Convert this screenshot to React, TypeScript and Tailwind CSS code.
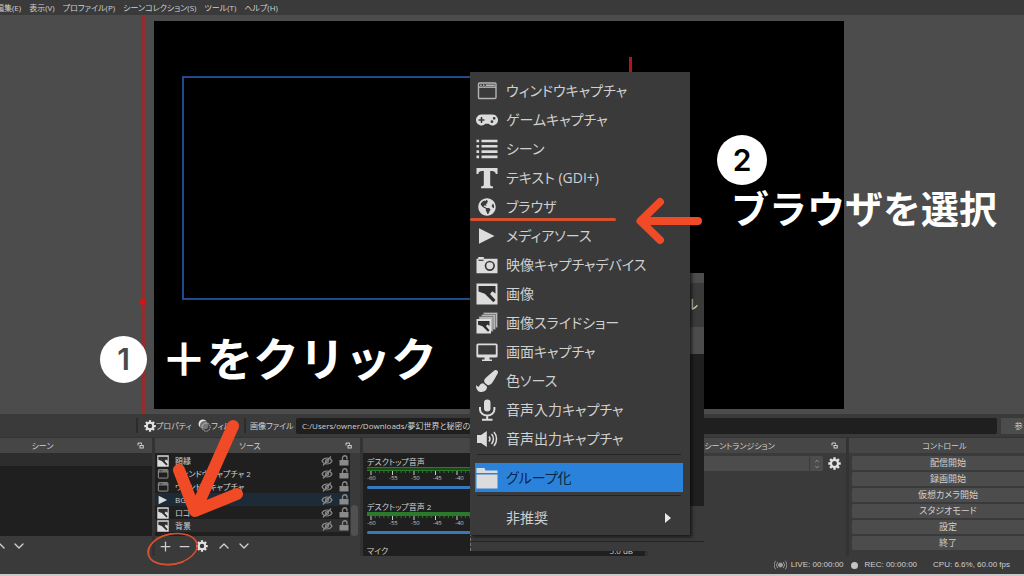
import type { ReactNode } from "react";
import { FaGamepad, FaGlobeAmericas, FaPaintBrush } from "react-icons/fa";
import { ChevronDown, ChevronUp, Minus, Plus } from "lucide-react";

type IconProps = { className?: string };

const WindowIcon = ({ className }: IconProps) => (
  <svg viewBox="0 0 22 22" className={className} fill="none" stroke="#b4b4b4">
    <rect x="2.5" y="3" width="17.5" height="15.5" rx="1" strokeWidth="1.4" />
    <path d="M2.5 7.2h17.5" strokeWidth="1.4" />
    <path d="M4.2 5.2h1.5M7 5.2h1.5M9.8 5.2h9" strokeWidth="1.6" />
  </svg>
);

const ListIcon = ({ className }: IconProps) => (
  <svg viewBox="0 0 22 22" className={className} stroke="currentColor" strokeWidth="2.6">
    <path d="M0.5 3h2.6M5.5 3h16M0.5 8.3h2.6M5.5 8.3h16M0.5 13.6h2.6M5.5 13.6h16M0.5 18.9h2.6M5.5 18.9h16" />
  </svg>
);

const TextIcon = ({ className }: IconProps) => (
  <svg viewBox="0 0 22 22" className={className} fill="currentColor">
    <path d="M0.5 1h21v6h-1.700c-.3-2-1.500-3-4-3h-1.600v13.500c0 1.300.7 1.800 2.800 2v1.700H5v-1.700c2.100-.2 2.800-.7 2.800-2V4H6.200c-2.500 0-3.700 1-4 3H0.500z" />
  </svg>
);

const PlayIcon = ({ className }: IconProps) => (
  <svg viewBox="0 0 22 22" className={className} fill="currentColor">
    <path d="M3 3.300l15.500 7.700L3 18.700z" />
  </svg>
);

const CameraIcon = ({ className }: IconProps) => (
  <svg viewBox="0 0 22 22" className={className}>
    <path fill="currentColor" d="M2.200 3h5.600v1.800h13.700v14.400H0.500V4.800h1.700z" />
    <path d="M2.500 6.300h5" stroke="#3a3a3a" strokeWidth="1.200" />
    <circle cx="13.800" cy="11.800" r="4.300" fill="none" stroke="#3a3a3a" strokeWidth="1.700" />
  </svg>
);

const ImageIcon = ({ className }: IconProps) => (
  <svg viewBox="0 0 22 22" className={className}>
    <rect x="0.5" y="0.5" width="21" height="21" fill="currentColor" />
    <path fill="#2f2f2f" d="M2.500 3h17v7.500l-3.200-2.300-2.300 2.800 5.500 6-2.200 2.300-8.500-8.500-6.300-2.300z" />
  </svg>
);

const SlideshowIcon = ({ className }: IconProps) => (
  <svg viewBox="0 0 22 22" className={className}>
    <g fill="#b8b8b8" stroke="#5a5a5a" strokeWidth="0.600">
      <rect x="7.500" y="0.500" width="14" height="15" />
      <rect x="5.500" y="2.500" width="14" height="15" />
      <rect x="3" y="4.500" width="14" height="15" />
    </g>
    <rect x="0.500" y="7" width="14.500" height="14.500" fill="currentColor" />
    <path fill="#2f2f2f" d="M2 9h11.500v5l-2.200-1.500-1.300 1.800 3.500 4-1.500 1.500-5.500-5.500-4.500-1.500z" />
  </svg>
);

const MonitorIcon = ({ className }: IconProps) => (
  <svg viewBox="0 0 22 22" className={className}>
    <rect x="1.300" y="3.300" width="19.400" height="12.400" rx="0.800" fill="none" stroke="currentColor" strokeWidth="1.800" />
    <path fill="currentColor" d="M1 13.500h20v2.500H1zM8.500 16h5v2.500h2.500V20H6v-1.500h2.500z" />
  </svg>
);

const MicIcon = ({ className }: IconProps) => (
  <svg viewBox="0 0 22 22" className={className}>
    <rect x="8" y="0.500" width="6.500" height="12" rx="3.250" fill="currentColor" />
    <path d="M4 8v2.500a7.200 6 0 0 0 14.400 0V8M11.200 16.500v4M6 20.700h10.500" fill="none" stroke="currentColor" strokeWidth="2" />
  </svg>
);

const SpeakerIcon = ({ className }: IconProps) => (
  <svg viewBox="0 0 22 22" className={className}>
    <path fill="currentColor" d="M1 7h4L10.800 3v16L5 15H1z" />
    <path d="M13 8.500a4 4 0 0 1 0 5M15.500 6a7.500 7.500 0 0 1 0 10M18 4a11 11 0 0 1 0 14" fill="none" stroke="currentColor" strokeWidth="1.500" />
  </svg>
);

const FolderIcon = ({ className }: IconProps) => (
  <svg viewBox="0 0 22 22" className={className} fill="currentColor">
    <path d="M0.500 1h8l1 2.500h12V6H0.500z" />
    <path d="M0.500 7.500h21V21.500H0.500z" />
  </svg>
);

const GearIcon = ({ className }: IconProps) => (
  <svg viewBox="0 0 24 24" className={className} fill="none" stroke="currentColor">
    <circle cx="12" cy="12" r="6.500" strokeWidth="4" />
    <g strokeWidth="4.500">
      <path d="M12 0.500v4M12 19.500v4M0.500 12h4M19.500 12h4M3.900 3.900l2.800 2.800M17.300 17.300l2.800 2.800M3.900 20.100l2.800-2.800M17.300 6.700l2.800-2.800" />
    </g>
  </svg>
);

const FilterIcon = ({ className }: IconProps) => (
  <svg viewBox="0 0 24 24" className={className}>
    <circle cx="9" cy="9" r="8" fill="currentColor" />
    <circle cx="12" cy="12" r="7.500" fill="#777" stroke="#3a3a3a" />
    <circle cx="15" cy="15" r="7.500" fill="none" stroke="currentColor" strokeWidth="1.600" strokeDasharray="2 1.500" />
  </svg>
);

const PopoutIcon = ({ className }: IconProps) => (
  <svg viewBox="0 0 14 14" className={className} fill="none" stroke="currentColor" strokeWidth="2">
    <path d="M2 7V2h7v3" />
    <rect x="6" y="7" width="6.500" height="5" />
  </svg>
);

const HiddenIcon = ({ className }: IconProps) => (
  <svg viewBox="0 0 24 20" className={className} fill="none" stroke="currentColor" strokeWidth="2.400">
    <path d="M2 10c4-8 16-8 20 0-4 8-16 8-20 0z" />
    <circle cx="12" cy="10" r="3" />
    <path d="M4 19L20 1" />
  </svg>
);

const UnlockIcon = ({ className }: IconProps) => (
  <svg viewBox="0 0 20 22" className={className}>
    <path d="M7 10V6a4.500 4.500 0 0 1 9 0v3" fill="none" stroke="currentColor" strokeWidth="2.600" />
    <rect x="1" y="10" width="18" height="11" fill="currentColor" />
  </svg>
);

const BroadcastIcon = ({ className }: IconProps) => (
  <svg viewBox="0 0 26 20" className={className} fill="none" stroke="currentColor" strokeWidth="1.800">
    <circle cx="13" cy="10" r="4" fill="currentColor" />
    <path d="M7.500 4a9 9 0 0 0 0 12M18.500 4a9 9 0 0 1 0 12M3.500 1.500a13 13 0 0 0 0 17M22.500 1.500a13 13 0 0 1 0 17" />
  </svg>
);

const MENUS = ["編集(E)", "表示(V)", "プロファイル(P)", "シーンコレクション(S)", "ツール(T)", "ヘルプ(H)"];

const SOURCE_TYPES = [
  { label: "ウィンドウキャプチャ", Icon: WindowIcon },
  { label: "ゲームキャプチャ", Icon: FaGamepad },
  { label: "シーン", Icon: ListIcon },
  { label: "テキスト (GDI+)", Icon: TextIcon },
  { label: "ブラウザ", Icon: FaGlobeAmericas, small: true },
  { label: "メディアソース", Icon: PlayIcon },
  { label: "映像キャプチャデバイス", Icon: CameraIcon },
  { label: "画像", Icon: ImageIcon },
  { label: "画像スライドショー", Icon: SlideshowIcon },
  { label: "画面キャプチャ", Icon: MonitorIcon },
  { label: "色ソース", Icon: FaPaintBrush },
  { label: "音声入力キャプチャ", Icon: MicIcon },
  { label: "音声出力キャプチャ", Icon: SpeakerIcon },
];

const SOURCES = [
  { label: "額縁", Icon: ImageIcon, row: "" },
  { label: "ウィンドウキャプチャ 2", Icon: WindowIcon, row: "" },
  { label: "ウィンドウキャプチャ", Icon: WindowIcon, row: "" },
  { label: "BGM", Icon: PlayIcon, row: "bg-[#1d2a37]" },
  { label: "ロゴ", Icon: ImageIcon, row: "" },
  { label: "背景", Icon: ImageIcon, row: "bg-[#2d2d2d]" },
];

const CONTROLS = ["配信開始", "録画開始", "仮想カメラ開始", "スタジオモード", "設定", "終了"];

const DB_MARKS = ["-60", "-55", "-50", "-45", "-40"];

type DockProps = { title: string; popout?: boolean; className?: string; headerClass?: string; children: ReactNode };

const Dock = ({ title, popout = true, className = "", headerClass = "pr-1", children }: DockProps) => (
  <section className={`flex min-w-0 flex-col ${className}`}>
    <header className={`flex h-[15px] items-center bg-[#464646] ${headerClass}`}>
      <h2 className="flex-1 text-center text-[8px]">{title}</h2>
      {popout && <PopoutIcon className="mr-1 size-[7px]" />}
    </header>
    {children}
  </section>
);

const Meter = ({ label, active }: { label: string; active: boolean }) => (
  <div className="h-[45px] pt-[3px] pl-1">
    <label htmlFor={label} className="block h-[11px] text-[8px] leading-[11px]">
      {label}
    </label>
    <div className={`h-[4px] border-y border-[#2b7a2b] ${active ? "bg-[#2b7a2b]" : "bg-[#1c4a1c]"}`} />
    <svg className="block h-[4px] w-full" preserveAspectRatio="none" viewBox="0 0 278 4">
      {Array.from({ length: 64 }, (_, i) => (
        <path key={i} d={`M${4 + i * 4.3} 0v${i % 5 === 0 ? 4 : 2}`} stroke={i % 5 === 0 ? "#ccc" : "#2b7a2b"} />
      ))}
    </svg>
    <div className="flex h-[6px] text-[6px] leading-[6px] text-[#c0c0c0]">
      {DB_MARKS.map((mark) => (
        <span key={mark} className="w-[22px]">
          {mark}
        </span>
      ))}
    </div>
    <input
      id={label}
      type="range"
      defaultValue={100}
      className="mt-[5px] block h-[3px] w-full appearance-none rounded-full bg-[#3a78bd] [&::-webkit-slider-thumb]:appearance-none"
    />
  </div>
);

const Preview = () => (
  <main className="relative grid flex-1 grid-cols-[154fr_690fr_180fr] bg-[#4c4c4c] pt-[6px] pb-[5px]">
    <div className="relative col-start-2 bg-black">
      <div className="absolute top-[55px] left-[28px] h-[224px] w-[450px] border-2 border-[#1f4a8c]" />
      <div className="absolute top-[36px] left-[475px] h-[20px] w-[3px] bg-[#b81414]" />
    </div>
    <div className="absolute inset-y-0 left-[142px] w-[3px] bg-[#932c2c]" />
    <div className="absolute top-[284px] left-[140px] size-[6px] rounded-full bg-[#e01010]" />
  </main>
);

const SourceToolbar = () => (
  <div className="flex h-[23px] items-center bg-[#3a3a3a] text-[8px]">
    <div className="ml-[136px] h-[15px] w-[2px] bg-[#2b2b2b]" />
    <button className="ml-[6px] flex w-[54px] items-center">
      <GearIcon className="size-[12px] shrink-0 text-[#e4e4e4]" />
      <span className="whitespace-nowrap">プロパティ</span>
    </button>
    <button className="flex w-[46px] items-center">
      <FilterIcon className="size-[13px] shrink-0 text-[#e4e4e4]" />
      <span className="whitespace-nowrap">フィルタ</span>
    </button>
    <div className="h-[15px] w-[2px] bg-[#2b2b2b]" />
    <label htmlFor="image-path" className="w-[50px] pl-1 whitespace-nowrap">
      画像ファイル
    </label>
    <input
      id="image-path"
      defaultValue="C:/Users/owner/Downloads/夢幻世界と秘密の"
      className="h-[16px] min-w-0 flex-1 rounded-xs bg-[#1f1f1f] pl-[6px] text-[8px]"
    />
    <button className="ml-1 h-[16px] w-[23px] bg-[#4c4c4c] pl-3">参</button>
  </div>
);

const SourceMenu = () => (
  <div className="absolute top-[72px] left-[470px] w-[220px] bg-[#3a3a3a] pt-[4px] pr-[7px] pb-[3px] pl-[5px] text-[14px] shadow-[2px_2px_3px_rgba(0,0,0,0.6)]">
    {SOURCE_TYPES.map(({ label, Icon, small }) => (
      <button key={label} className="flex h-[29px] w-full items-center gap-2 pl-px whitespace-nowrap">
        <span className="flex w-[22px] justify-center text-[#dcdcdc]">
          <Icon className={small ? "size-[18px]" : "size-[22px]"} />
        </span>
        {label}
      </button>
    ))}
    <hr className="mx-[2px] mt-px mb-[8px] border-[#232323]" />
    <button className="flex h-[29px] w-full items-center gap-2 bg-[#2a82da] pl-px text-[#0d2744]">
      <FolderIcon className="size-[22px] text-[#dcdcdc]" />
      グループ化
    </button>
    <hr className="mx-[2px] mt-[3px] mb-[7px] border-[#232323]" />
    <button className="flex h-[29px] w-full items-center justify-between pr-3 pl-[31px]">
      非推奨
      <svg viewBox="0 0 6 10" className="h-[10px] w-[6px]" fill="#e8e8e8">
        <path d="M0 0l6 5-6 5z" />
      </svg>
    </button>
  </div>
);

// Lower part of the window that was open behind the menu
const BackWindow = () => (
  <div className="absolute top-[273px] left-[470px] w-[234px] border-l border-dashed border-[#777] bg-[#3a3a3a]">
    <div className="h-[10px] bg-[#4c4c4c]" />
    <div className="h-[44px] pt-[10px] pr-[6px] text-right text-[14px]">ル</div>
    <div className="h-[27px] bg-[#4c4c4c]" />
    <div className="h-[152px] bg-[#1f1f1f]" />
    <div className="h-[45px] pt-[35px]">
      <div className="h-px bg-[#232323]" />
    </div>
  </div>
);

const Step = ({ number, className }: { number: string; className: string }) => (
  <span className={`absolute flex items-center justify-center rounded-full bg-white font-['Inter',sans-serif] text-[30px] font-semibold ${className}`}>
    {number}
  </span>
);

const Annotations = () => (
  <>
    <Step number="1" className="top-[336px] left-[100px] size-[47px] text-[#4a4a4a]" />
    <p className="absolute top-[334px] left-[161px] text-[46px] leading-[48px] font-bold whitespace-nowrap text-white [font-feature-settings:normal]">
      ＋をクリック
    </p>
    <Step number="2" className="top-[135px] left-[717px] size-[50px] text-black" />
    <p className="absolute top-[185px] left-[731px] text-[38px] leading-[46px] font-bold whitespace-nowrap text-white [font-feature-settings:normal]">
      ブラウザを選択
    </p>
    <div className="absolute top-[218px] left-[470px] h-[3px] w-[146px] rounded-full bg-[#d4502f]" />
    <svg viewBox="0 0 68 50" className="absolute top-[196px] left-[635px] h-[50px] w-[68px]" fill="none" stroke="#f04a26" strokeWidth="8" strokeLinecap="round" strokeLinejoin="round">
      <path d="M63 25H6M25 6L5.500 25 25 44" />
    </svg>
    <svg viewBox="0 0 110 160" className="pointer-events-none absolute top-[412px] left-[140px] h-[160px] w-[110px]" fill="none" strokeLinecap="round" strokeLinejoin="round">
      <path d="M93 14L56 97M39 58L55 99 97 82" stroke="#f04a26" strokeWidth="12" />
      <g stroke="#d4502f">
        <ellipse cx="32.500" cy="137" rx="25" ry="15" transform="rotate(-12 32.500 137)" strokeWidth="1.500" />
        <path d="M32 122c-14 1-26 11-23 22 3 9 20 11 34 6" strokeWidth="1.500" />
      </g>
    </svg>
  </>
);

export default function App() {
  return (
    <div className="relative flex min-h-screen flex-col overflow-hidden bg-[#3a3a3a] font-['Open_Sans','Noto_Sans_CJK_JP',sans-serif] text-[#d0d0d0] [font-feature-settings:'palt']">
      <nav className="-ml-1 flex h-[15px] items-center gap-[8px] text-[8px] whitespace-nowrap">
        {MENUS.map((menu) => (
          <button key={menu}>{menu}</button>
        ))}
      </nav>

      <Preview />
      <SourceToolbar />

      <div className="grid grid-cols-[152fr_205fr_282fr_198fr_175fr] gap-x-[3px] bg-[#333333] pt-px">
        <Dock title="シーン" className="-ml-[52px]">
          <div className="h-[13px] bg-[#2d2d2d]" />
          <div className="flex-1 bg-[#1f1f1f]" />
          <div className="flex h-[20px] items-center gap-[3px] bg-[#3a3a3a] pl-[44px]">
            <button aria-label="上へ">
              <ChevronUp className="size-4" />
            </button>
            <button aria-label="下へ">
              <ChevronDown className="size-4" />
            </button>
          </div>
        </Dock>

        <Dock title="ソース">
          <div className="flex h-[83px] bg-[#1f1f1f]">
            <ul className="min-w-0 flex-1 pt-px">
              {SOURCES.map(({ label, Icon, row }) => (
                <li key={label} className={`flex h-[13px] items-center gap-[6px] pl-[2px] text-[8px] ${row}`}>
                  <Icon className="size-[12px] text-[#dcdcdc]" />
                  <span className="flex-1 whitespace-nowrap">{label}</span>
                  <button aria-label="表示">
                    <HiddenIcon className="h-[10px] w-[12px] text-[#8a8a8a]" />
                  </button>
                  <button aria-label="ロック">
                    <UnlockIcon className="h-[11px] w-[10px] text-[#8a8a8a]" />
                  </button>
                </li>
              ))}
            </ul>
            <div className="ml-px flex w-[10px] items-end bg-[#3a3a3a]">
              <div className="ml-px h-[31px] w-[7px] rounded-full bg-[#505050]" />
            </div>
          </div>
          <div className="flex h-[20px] items-center gap-1 bg-[#3a3a3a] pl-[3px]">
            <button aria-label="追加">
              <Plus className="size-[15px]" />
            </button>
            <button aria-label="削除">
              <Minus className="size-[15px]" />
            </button>
            <button aria-label="設定">
              <GearIcon className="size-[12px] text-[#e4e4e4]" />
            </button>
            <button aria-label="上へ" className="ml-1">
              <ChevronUp className="size-4" />
            </button>
            <button aria-label="下へ">
              <ChevronDown className="size-4" />
            </button>
          </div>
        </Dock>

        <Dock title="">
          <div className="h-[103px] overflow-hidden bg-[#1f1f1f]">
            <Meter label="デスクトップ音声" active={false} />
            <Meter label="デスクトップ音声 2" active />
            <div className="flex justify-between pr-3 pl-1 text-[8px] leading-[15px]">
              <span>マイク</span>
              <span>5.0 dB</span>
            </div>
          </div>
        </Dock>

        <Dock title="シーントランジション">
          <div className="flex flex-1 items-start bg-[#3a3a3a] pt-[3px]">
            <div className="relative flex-1">
              <select aria-label="シーントランジション" className="block h-[15px] w-full appearance-none rounded-xs bg-[#4c4c4c]" />
              <div className="pointer-events-none absolute inset-y-0 right-0 flex w-[14px] flex-col items-center justify-center border-l border-[#3a3a3a]">
                <ChevronUp className="size-[6px]" />
                <ChevronDown className="size-[6px]" />
              </div>
            </div>
            <button aria-label="トランジション設定" className="mx-[5px] mt-px">
              <GearIcon className="size-[13px] text-[#e4e4e4]" />
            </button>
          </div>
        </Dock>

        <Dock title="コントロール" popout={false} headerClass="pl-4">
          <div className="flex flex-1 flex-col gap-[2px] bg-[#3a3a3a] pt-[3px] pl-[3px]">
            {CONTROLS.map((control) => (
              <button key={control} className="h-[14px] rounded-l-xs bg-[#4c4c4c] pl-5 text-[9px] leading-[14px]">
                {control}
              </button>
            ))}
          </div>
        </Dock>
      </div>

      <footer className="flex h-[20px] items-center justify-end border-b-2 border-[#c8c8c8] pr-[14px] font-['Liberation_Sans',sans-serif] text-[8px]">
        <BroadcastIcon className="mr-1 h-[10px] w-[13px] text-[#a0a0a0]" />
        <span>LIVE: 00:00:00</span>
        <span className="mx-[7px] size-[7px] rounded-full bg-[#c4c4c4]" />
        <span>REC: 00:00:00</span>
        <span className="ml-4">CPU: 6.6%, 60.00 fps</span>
      </footer>

      <BackWindow />
      <SourceMenu />
      <Annotations />
    </div>
  );
}
